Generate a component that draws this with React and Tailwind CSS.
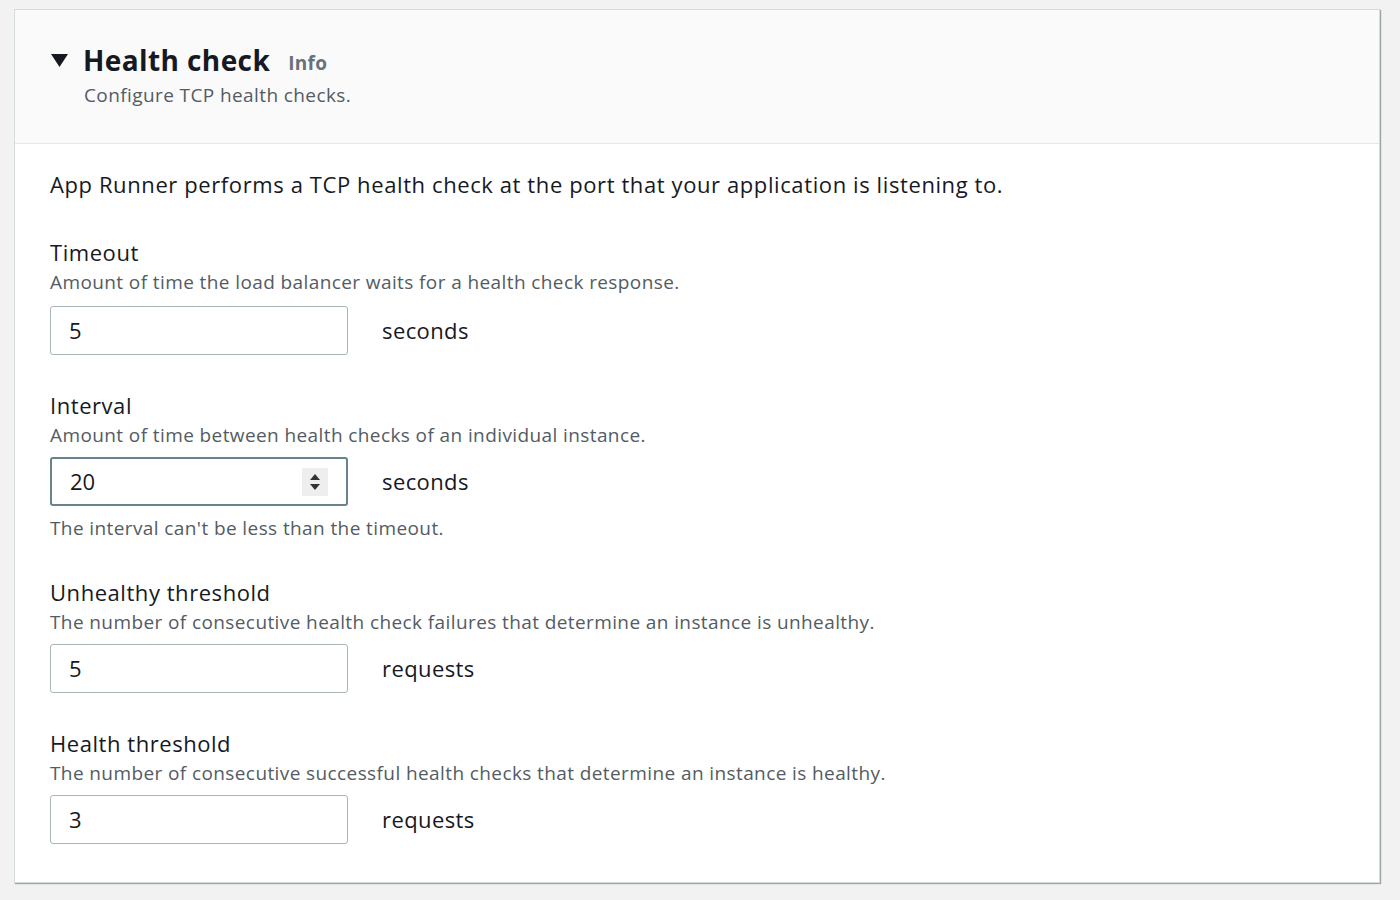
const fields = [
  {
    label: "Timeout",
    desc: "Amount of time the load balancer waits for a health check response.",
    value: "5",
    unit: "seconds",
  },
  {
    label: "Interval",
    desc: "Amount of time between health checks of an individual instance.",
    value: "20",
    unit: "seconds",
    focused: true,
    hint: "The interval can't be less than the timeout.",
  },
  {
    label: "Unhealthy threshold",
    desc: "The number of consecutive health check failures that determine an instance is unhealthy.",
    value: "5",
    unit: "requests",
  },
  {
    label: "Health threshold",
    desc: "The number of consecutive successful health checks that determine an instance is healthy.",
    value: "3",
    unit: "requests",
  },
];

const Spinner = () => (
  <div className="flex h-[28px] w-[26px] items-center justify-center bg-[#eeeeee]">
    <svg width="12" height="20" viewBox="0 0 12 20">
      <path d="M6 2 L11 8 L1 8 Z" fill="#333" />
      <path d="M1 12 L11 12 L6 18 Z" fill="#333" />
    </svg>
  </div>
);

const Field = ({ field, first }) => (
  <div className={first ? "mt-[38px]" : "mt-[35px]"}>
    <div className="text-[22px] leading-[30px] tracking-[0.55px] text-[#16191f]">
      {field.label}
    </div>
    <div className="mt-[1px] text-[19px] leading-[28px] tracking-[0.4px] text-[#545b64]">
      {field.desc}
    </div>
    <div className={`flex items-center ${first ? "mt-[10px]" : "mt-[8px]"}`}>
      <div
        className={`flex h-[49px] w-[298px] items-center justify-between rounded-[3px] bg-white pl-[18px] pr-[18px] ${
          field.focused
            ? "border-2 border-[#67838c]"
            : "border border-[#aab7b8]"
        }`}
      >
        <span className="text-[22px] text-[#16191f]">{field.value}</span>
        {field.focused && <Spinner />}
      </div>
      <span className="ml-[34px] text-[22px] tracking-[0.4px] text-[#16191f]">
        {field.unit}
      </span>
    </div>
    {field.hint && (
      <div className="mt-[8px] text-[19px] leading-[28px] tracking-[0.4px] text-[#545b64]">
        {field.hint}
      </div>
    )}
  </div>
);

export default function App() {
  return (
    <div
      className="min-h-screen bg-[#f2f2f2] pl-[14px] pr-[20px] pt-[9px]"
      style={{ fontFamily: '"Open Sans", "Noto Sans", sans-serif' }}
    >
      <div className="border border-[#d5dbdb] bg-white shadow-[1px_1px_1px_0_rgba(0,28,36,0.35)]">
        {/* Header */}
        <div className="h-[134px] border-b border-[#e4e8e8] bg-[#fafafa] pl-[36px] pt-[30px]">
          <div className="flex items-center">
            <svg width="17" height="13" viewBox="0 0 17 13" className="mr-[15px]">
              <path d="M0 0 L17 0 L8.5 13 Z" fill="#16191f" />
            </svg>
            <h2 className="text-[28px] font-bold leading-[40px] tracking-[0.4px] text-[#16191f]">
              Health check
            </h2>
            <span className="ml-[18px] mt-[6px] text-[19px] font-bold tracking-[0.3px] text-[#687078]">
              Info
            </span>
          </div>
          <p className="mt-[1px] pl-[33px] text-[19px] leading-[28px] tracking-[0.4px] text-[#545b64]">
            Configure TCP health checks.
          </p>
        </div>

        {/* Body */}
        <div className="pb-[38px] pl-[35px] pt-[25px]">
          <p className="text-[22px] leading-[30px] tracking-[0.6px] text-[#16191f]">
            App Runner performs a TCP health check at the port that your application is
            listening to.
          </p>
          {fields.map((f, i) => (
            <Field key={f.label} field={f} first={i === 0} />
          ))}
        </div>
      </div>
    </div>
  );
}
